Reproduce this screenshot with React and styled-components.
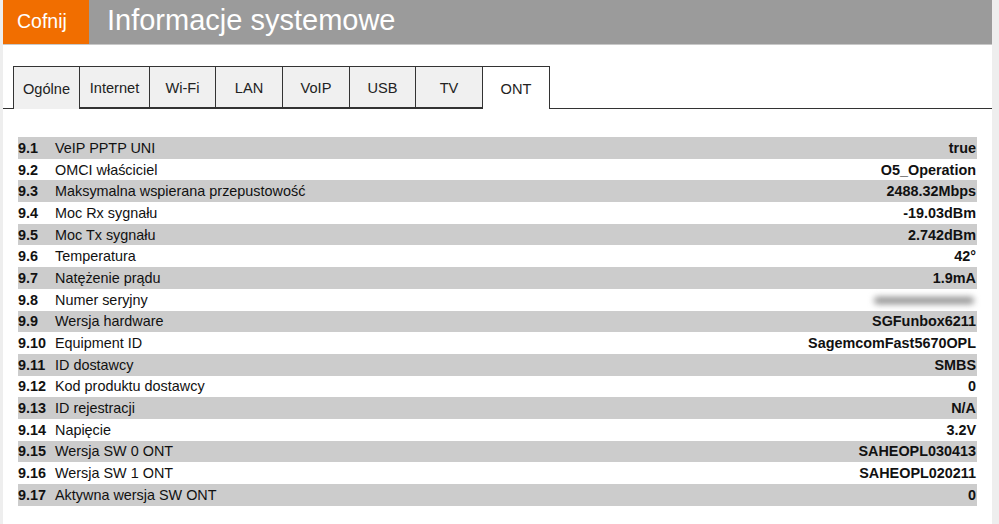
import styled, { createGlobalStyle } from 'styled-components';

const GlobalStyle = createGlobalStyle`
	html, body {
		margin: 0;
		padding: 0;
		background: #eeeeee;
		font-family: "Liberation Sans", Arial, sans-serif;
	}
`;

const rows = [
	['9.1', 'VeIP PPTP UNI', 'true'],
	['9.2', 'OMCI właściciel', 'O5_Operation'],
	['9.3', 'Maksymalna wspierana przepustowość', '2488.32Mbps'],
	['9.4', 'Moc Rx sygnału', '-19.03dBm'],
	['9.5', 'Moc Tx sygnału', '2.742dBm'],
	['9.6', 'Temperatura', '42°'],
	['9.7', 'Natężenie prądu', '1.9mA'],
	['9.8', 'Numer seryjny', null],
	['9.9', 'Wersja hardware', 'SGFunbox6211'],
	['9.10', 'Equipment ID', 'SagemcomFast5670OPL'],
	['9.11', 'ID dostawcy', 'SMBS'],
	['9.12', 'Kod produktu dostawcy', '0'],
	['9.13', 'ID rejestracji', 'N/A'],
	['9.14', 'Napięcie', '3.2V'],
	['9.15', 'Wersja SW 0 ONT', 'SAHEOPL030413'],
	['9.16', 'Wersja SW 1 ONT', 'SAHEOPL020211'],
	['9.17', 'Aktywna wersja SW ONT', '0'],
];

// szerokości zakładek jak w oryginale
const tabs = [
	['Ogólne', 67],
	['Internet', 71],
	['Wi-Fi', 67],
	['LAN', 68],
	['VoIP', 68],
	['USB', 67],
	['TV', 68],
	['ONT', 68],
];

function App() {
	return (
		<>
			<GlobalStyle />
			<Page>
				<Header>
					<BackButton>Cofnij</BackButton>
					<Title>Informacje systemowe</Title>
				</Header>
				<TabBar>
					{tabs.map(([tab, width]) => (
						<Tab key={tab} $width={width} $active={tab === 'ONT'}>
							{tab}
						</Tab>
					))}
				</TabBar>
				<Table>
					{rows.map(([num, label, value], i) => (
						<Row key={num} $striped={i % 2 === 0}>
							<Num>{num}</Num>
							<Label>{label}</Label>
							<Value>{value === null ? <Blurred /> : value}</Value>
						</Row>
					))}
				</Table>
			</Page>
		</>
	);
}

const Page = styled.div`
	margin: 0 7px 0 3px;
	background: #fff;
	min-height: 524px;
`;

const Header = styled.div`
	display: flex;
	height: 45px;
	background: #9b9b9b;
	border-bottom: 1px solid #c8c8c8;
	box-sizing: border-box;
`;

const BackButton = styled.div`
	width: 86px;
	box-sizing: border-box;
	padding: 0 0 2px 14px;
	background: #f16e00;
	color: #fff;
	font-size: 19.5px;
	display: flex;
	align-items: center;
`;

const Title = styled.h1`
	margin: 0;
	padding: 0 0 4px 18px;
	font-weight: normal;
	font-size: 29px;
	color: #fff;
	display: flex;
	align-items: center;
`;

const TabBar = styled.div`
	display: flex;
	margin-top: 21px;
	padding-left: 10px;
	border-bottom: 1px solid #333;
	height: 42px;
`;

const Tab = styled.div`
	width: ${(p) => p.$width}px;
	height: 42px;
	box-sizing: border-box;
	border: 1px solid #333;
	margin-left: -1px;
	background: ${(p) => (p.$active ? '#fff' : '#f0f0f0')};
	display: flex;
	align-items: center;
	justify-content: center;
	font-size: 14.6px;
	color: #222;
	padding-top: 2px;
	${(p) => p.$active && 'border-bottom: none; height: 43px;'}
	&:first-child {
		margin-left: 0;
		border-bottom: none;
		height: 43px;
	}
`;

const Table = styled.div`
	margin: 28px 15px 0;
	display: flex;
	flex-direction: column;
`;

const Row = styled.div`
	display: flex;
	align-items: center;
	height: 21.7px;
	background: ${(p) => (p.$striped ? '#cccccc' : '#fff')};
	font-size: 14.4px;
	color: #111;
`;

const Num = styled.span`
	width: 37px;
	font-weight: bold;
`;

const Label = styled.span`
	flex: 1;
`;

const Value = styled.span`
	font-weight: bold;
	padding-right: 1px;
`;

const Blurred = styled.span`
	display: inline-block;
	width: 100px;
	height: 7px;
	margin-right: 2px;
	border-radius: 4px;
	background: #8f8f8f;
	filter: blur(3px);
	vertical-align: middle;
`;

export default App;
